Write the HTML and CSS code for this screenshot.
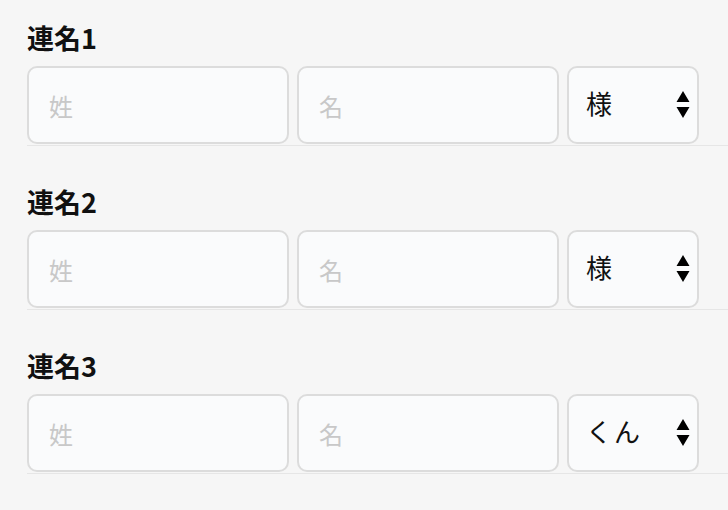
FILE: index.html
```html
<!DOCTYPE html>
<html lang="ja">
<head>
  <meta charset="UTF-8" />
  <meta name="viewport" content="width=device-width, initial-scale=1.0" />
  <title>連名</title>
  <link rel="stylesheet" href="styles.css">
</head>
<body>
  <div class="group">
    <label class="group-label">連名1</label>
    <div class="name-row">
      <input class="name-input" type="text" placeholder="姓">
      <input class="name-input" type="text" placeholder="名">
      <span class="title-wrap">
        <select class="title-select">
          <option selected>様</option>
          <option>くん</option>
          <option>ちゃん</option>
        </select>
        <svg class="title-arrow" width="14" height="28" viewBox="0 0 14 28"><path d="M7 0 L13.5 11 H0.5 Z M0.5 16 H13.5 L7 27 Z" fill="#000"/></svg>
      </span>
    </div>
  </div>

  <div class="group">
    <label class="group-label">連名2</label>
    <div class="name-row">
      <input class="name-input" type="text" placeholder="姓">
      <input class="name-input" type="text" placeholder="名">
      <span class="title-wrap">
        <select class="title-select">
          <option selected>様</option>
          <option>くん</option>
          <option>ちゃん</option>
        </select>
        <svg class="title-arrow" width="14" height="28" viewBox="0 0 14 28"><path d="M7 0 L13.5 11 H0.5 Z M0.5 16 H13.5 L7 27 Z" fill="#000"/></svg>
      </span>
    </div>
  </div>

  <div class="group">
    <label class="group-label">連名3</label>
    <div class="name-row">
      <input class="name-input" type="text" placeholder="姓">
      <input class="name-input" type="text" placeholder="名">
      <span class="title-wrap">
        <select class="title-select">
          <option>様</option>
          <option selected>くん</option>
          <option>ちゃん</option>
        </select>
        <svg class="title-arrow" width="14" height="28" viewBox="0 0 14 28"><path d="M7 0 L13.5 11 H0.5 Z M0.5 16 H13.5 L7 27 Z" fill="#000"/></svg>
      </span>
    </div>
  </div>
</body>
</html>
```

FILE: styles.css
```css
body {
  margin: 0;
  padding: 20px 0 0 27px;
  background: #f6f6f6;
  font-family: 'Noto Sans CJK JP', sans-serif;
  color: #111;
  overflow: hidden;
}

.group {
  margin-bottom: 38px;
}

.group-label {
  display: block;
  font-size: 27px;
  line-height: 36px;
  font-weight: bold;
  margin-bottom: 10px;
}

.name-row {
  display: grid;
  grid-template-columns: 262px 262px 132px;
  gap: 8px;
  padding-bottom: 1px;
  border-bottom: 1px solid #e6e6e6;
}

.name-input,
.title-select {
  box-sizing: border-box;
  height: 78px;
  margin: 0;
  border: 2px solid #dcdcdc;
  border-radius: 10px;
  background: #fafbfc;
  font-family: inherit;
  font-size: 24px;
  color: #111;
  outline: none;
}

.name-input {
  width: 262px;
  padding: 0 20px;
}

.name-input::placeholder {
  color: #c8c8c8;
}

.title-wrap {
  position: relative;
  display: block;
}

.title-select {
  width: 132px;
  padding: 0 40px 5px 17px;
  font-size: 26px;
  letter-spacing: 2px;
  appearance: none;
  -webkit-appearance: none;
}

.title-arrow {
  position: absolute;
  top: 25px;
  right: 9px;
  pointer-events: none;
}
```
